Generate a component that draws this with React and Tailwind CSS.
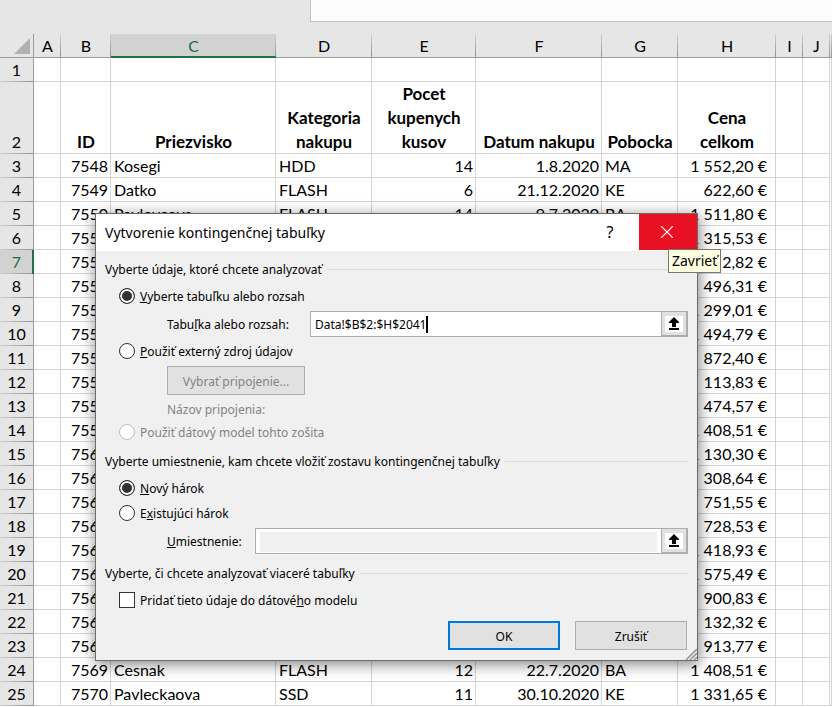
import { useState } from "react";
import clsx from "clsx";

const columns = [
  { name: "A", width: "w-[27px]" },
  { name: "B", width: "w-[50px]", title: "ID" },
  { name: "C", width: "w-[165px]", title: "Priezvisko" },
  { name: "D", width: "w-[96px]", title: "Kategoria nakupu" },
  { name: "E", width: "w-[104px]", title: "Pocet kupenych kusov" },
  { name: "F", width: "w-[126px]", title: "Datum nakupu" },
  { name: "G", width: "w-[76px]", title: "Pobocka" },
  { name: "H", width: "w-[98px]", title: "Cena celkom" },
  { name: "I", width: "w-[27px]" },
  { name: "J", width: "w-[27px]" },
  { name: "", width: "" },
];

const rows = [
  ["7548", "Kosegi", "HDD", "14", "1.8.2020", "MA", "1 552,20 €"],
  ["7549", "Datko", "FLASH", "6", "21.12.2020", "KE", "622,60 €"],
  ["7550", "Pavlovcova", "FLASH", "14", "9.7.2020", "BA", "1 511,80 €"],
  ["7551", "", "", "", "", "", "1 315,53 €"],
  ["7552", "", "", "", "", "", "2,82 €"],
  ["7553", "", "", "", "", "", "496,31 €"],
  ["7554", "", "", "", "", "", "1 299,01 €"],
  ["7555", "", "", "", "", "", "1 494,79 €"],
  ["7556", "", "", "", "", "", "872,40 €"],
  ["7557", "", "", "", "", "", "113,83 €"],
  ["7558", "", "", "", "", "", "474,57 €"],
  ["7559", "", "", "", "", "", "1 408,51 €"],
  ["7560", "", "", "", "", "", "1 130,30 €"],
  ["7561", "", "", "", "", "", "308,64 €"],
  ["7562", "", "", "", "", "", "751,55 €"],
  ["7563", "", "", "", "", "", "728,53 €"],
  ["7564", "", "", "", "", "", "1 418,93 €"],
  ["7565", "", "", "", "", "", "1 575,49 €"],
  ["7566", "", "", "", "", "", "900,83 €"],
  ["7567", "", "", "", "", "", "132,32 €"],
  ["7568", "", "", "", "", "", "913,77 €"],
  ["7569", "Cesnak", "FLASH", "12", "22.7.2020", "BA", "1 408,51 €"],
  ["7570", "Pavleckaova", "SSD", "11", "30.10.2020", "KE", "1 331,65 €"],
];

const cellAlign = [
  "pr-[3px] text-right",
  "pl-[3px] text-left",
  "pl-[3px] text-left",
  "pr-[3px] text-right",
  "pr-[3px] text-right",
  "pl-[3px] text-left",
  "pr-[9px] text-right",
];

const cell = "h-6 shadow-[inset_-1px_-1px_0_#d4d4d4]";

function RowHeader({ number, active }) {
  return (
    <th
      scope="row"
      className={clsx(
        "bg-[linear-gradient(to_right,#d0d0d0,#8f8f8f)] bg-[length:100%_1px] bg-bottom bg-no-repeat pr-px align-bottom font-normal",
        active
          ? "bg-[#d2d2d2] text-[#1e6b41] shadow-[inset_-2px_0_0_#217346]"
          : "bg-[#e6e6e6] shadow-[inset_-1px_0_0_#9b9b9b]"
      )}
    >
      {number}
    </th>
  );
}

function Sheet() {
  return (
    <table className="w-full table-fixed border-separate border-spacing-0 bg-white font-['Lato',sans-serif] text-base leading-6 text-black">
      <thead>
        <tr>
          <th className="h-6 w-[34px] bg-[#e6e6e6] shadow-[inset_-1px_-1px_0_#9b9b9b]">
            <svg viewBox="0 0 16 16" className="ml-auto mr-1 size-4" aria-hidden="true">
              <path d="M16 0v16H0z" fill="#b2b2b2" />
            </svg>
          </th>
          {columns.map((col, i) => (
            <th
              key={i}
              scope="col"
              className={clsx(
                "h-6 bg-[linear-gradient(to_bottom,#d0d0d0,#8f8f8f)] bg-[length:1px_100%] bg-right bg-no-repeat font-normal",
                col.width,
                col.name === "C"
                  ? "bg-[#d2d2d2] text-[#1e6b41] shadow-[inset_0_-2px_0_#217346]"
                  : "bg-[#e6e6e6] shadow-[inset_0_-1px_0_#9b9b9b]"
              )}
            >
              {col.name}
            </th>
          ))}
        </tr>
      </thead>
      <tbody>
        <tr>
          <RowHeader number={1} />
          {columns.map((col, i) => (
            <td key={i} className={cell}></td>
          ))}
        </tr>
        <tr>
          <RowHeader number={2} />
          {columns.map((col, i) => (
            <td
              key={i}
              className={clsx(cell, "px-1 text-center align-bottom text-[17px] leading-6 font-bold")}
            >
              {col.title}
            </td>
          ))}
        </tr>
        {rows.map((row, r) => (
          <tr key={row[0]}>
            <RowHeader number={r + 3} active={r + 3 === 7} />
            <td className={cell}></td>
            {row.map((value, i) => (
              <td key={i} className={clsx(cell, "whitespace-nowrap", cellAlign[i])}>
                {value}
              </td>
            ))}
            <td className={cell}></td>
            <td className={cell}></td>
            <td className={cell}></td>
          </tr>
        ))}
      </tbody>
    </table>
  );
}

function Legend({ children }) {
  return (
    <div className="flex h-[18px] items-center gap-[5px]">
      <h2 className="pt-0.5 whitespace-nowrap">{children}</h2>
      <span className="h-px flex-1 bg-[#dcdcdc]"></span>
    </div>
  );
}

function Radio({ children, ...props }) {
  return (
    <label className="flex h-6 items-center gap-[5px] pl-3.5 has-disabled:text-[#838383]">
      <input
        type="radio"
        className="size-4 appearance-none rounded-full border border-[#333] bg-white checked:bg-[#333] checked:shadow-[inset_0_0_0_2px_white] disabled:border-[#bcbcbc]"
        {...props}
      />
      <span className="pt-0.5">{children}</span>
    </label>
  );
}

function RangeButton({ label }) {
  return (
    <button
      type="button"
      aria-label={label}
      className="-my-px -mr-px flex w-[27px] shrink-0 items-center justify-center border border-r-2 border-b-2 border-[#adadad] bg-[#e1e1e1]"
    >
      <span className="flex h-4 w-[18px] items-center justify-center bg-white">
        <svg viewBox="0 0 10 13" className="h-[13px] w-2.5" aria-hidden="true">
          <path d="M5 0l5 5v1H7v4H3V6H0V5zM0 11h10v2H0z" fill="#000" />
        </svg>
      </span>
    </button>
  );
}

function PivotDialog() {
  const [source, setSource] = useState("range");
  const [target, setTarget] = useState("new");
  const [range, setRange] = useState("Data!$B$2:$H$2041");
  const [multi, setMulti] = useState(false);

  return (
    <div
      role="dialog"
      aria-labelledby="dialog-title"
      className="absolute top-[213px] left-[95px] w-[603px] border border-[#6b6b6b] bg-[#f0f0f0] font-['Noto_Sans',sans-serif] text-xs leading-[18px] text-black shadow-[1px_3px_14px_rgba(0,0,0,0.5)]"
    >
      <div className="flex h-[37px] items-start bg-white pl-[9px]">
        <h1 id="dialog-title" className="flex-1 self-center text-sm">
          Vytvorenie kontingenčnej tabuľky
        </h1>
        <button type="button" className="h-9 w-[58px] text-base">
          ?
        </button>
        <button
          type="button"
          aria-label="Zavrieť"
          className="flex h-9 w-[58px] items-center justify-center bg-[#e81123] pr-0.5"
        >
          <svg viewBox="0 0 12 12" className="size-3" aria-hidden="true">
            <path d="M0 0l12 12M12 0L0 12" stroke="#fff" strokeWidth="1.1" />
          </svg>
        </button>
      </div>
      <div
        role="tooltip"
        className="absolute top-[35px] left-[572px] border border-[#767676] bg-[#ffffe1] px-[3px] text-sm leading-[22px]"
      >
        Zavrieť
      </div>

      <form className="px-[9px] pt-[9px] pb-2.5" onSubmit={(e) => e.preventDefault()}>
        {/* Source data */}
        <Legend>Vyberte údaje, ktoré chcete analyzovať</Legend>
        <div className="mt-1.5">
          <Radio name="source" checked={source === "range"} onChange={() => setSource("range")}>
            <u>V</u>yberte tabuľku alebo rozsah
          </Radio>
        </div>
        <div className="mt-[3px] flex items-center pl-[62px]">
          <label htmlFor="range" className="w-[143px] pt-0.5">
            Tabu<u>ľ</u>ka alebo rozsah:
          </label>
          <div className="flex h-[26px] flex-1 border border-[#adadad] bg-white">
            <div className="flex flex-1 items-center pl-1">
              <input
                id="range"
                value={range}
                onChange={(e) => setRange(e.target.value)}
                className="field-sizing-content pt-0.5 outline-none"
              />
              <span className="h-[17px] w-0.5 bg-black"></span>
            </div>
            <RangeButton label="Vybrať rozsah" />
          </div>
        </div>
        <div className="mt-0.5">
          <Radio
            name="source"
            checked={source === "external"}
            onChange={() => setSource("external")}
          >
            <u>P</u>oužiť externý zdroj údajov
          </Radio>
        </div>
        <div className="mt-[3px] pl-[62px] text-[#838383]">
          <button
            type="button"
            disabled
            className="block h-[29px] w-[138px] border border-[#adadad] bg-[#e1e1e1] pt-0.5"
          >
            Vybrať pripojenie...
          </button>
          <p className="mt-1.5">Názov pripojenia:</p>
        </div>
        <div className="mt-px">
          <Radio name="source" disabled>
            Použiť dátový model tohto zošita
          </Radio>
        </div>

        {/* Location */}
        <div className="mt-2">
          <Legend>Vyberte umiestnenie, kam chcete vložiť zostavu kontingenčnej tabuľky</Legend>
        </div>
        <div className="mt-1.5 space-y-px">
          <Radio name="target" checked={target === "new"} onChange={() => setTarget("new")}>
            <u>N</u>ový hárok
          </Radio>
          <Radio
            name="target"
            checked={target === "existing"}
            onChange={() => setTarget("existing")}
          >
            E<u>x</u>istujúci hárok
          </Radio>
        </div>
        <div className="mt-[3px] flex items-center pl-[62px]">
          <label htmlFor="location" className="w-[88px] pt-0.5">
            <u>U</u>miestnenie:
          </label>
          <div className="flex h-[26px] flex-1 border border-[#adadad] bg-white">
            <input
              id="location"
              disabled={target === "new"}
              className="mx-1 mt-[3px] mb-px min-w-0 flex-1 outline-none disabled:bg-[#f0f0f0]"
            />
            <RangeButton label="Vybrať umiestnenie" />
          </div>
        </div>

        {/* Data model */}
        <div className="mt-2.5">
          <Legend>Vyberte, či chcete analyzovať viaceré tabuľky</Legend>
        </div>
        <label className="mt-1.5 flex h-6 items-center gap-[5px] pl-3.5">
          <input
            type="checkbox"
            checked={multi}
            onChange={(e) => setMulti(e.target.checked)}
            className="size-4 appearance-none border border-[#333] bg-white checked:bg-[#333] checked:shadow-[inset_0_0_0_3px_white]"
          />
          <span className="pt-0.5">
            Pridať tieto údaje do dátové<u>h</u>o modelu
          </span>
        </label>

        <div className="mt-[9px] flex justify-end gap-[15px] pr-px">
          <button
            type="submit"
            className="h-[29px] w-[112px] border-2 border-[#0078d7] bg-[#e1e1e1] pt-0.5"
          >
            OK
          </button>
          <button
            type="button"
            className="h-[29px] w-[112px] border border-[#adadad] bg-[#e1e1e1] pt-0.5"
          >
            Zrušiť
          </button>
        </div>
      </form>

      <svg
        viewBox="0 0 11 11"
        className="absolute right-0 bottom-0 size-[11px]"
        aria-hidden="true"
      >
        <path d="M0 11L11 0M4 11l7-7M8 11l3-3" stroke="#9a9a9a" strokeWidth="1.6" />
      </svg>
    </div>
  );
}

export default function App() {
  return (
    <div className="relative h-screen overflow-hidden bg-white">
      <div className="flex h-[34px] items-start bg-[#e6e6e6] pl-[310px]">
        <div className="h-[22px] flex-1 border-b border-l border-[#c0c0c0] bg-[#fdfdfd]"></div>
      </div>
      <Sheet />
      <PivotDialog />
    </div>
  );
}
